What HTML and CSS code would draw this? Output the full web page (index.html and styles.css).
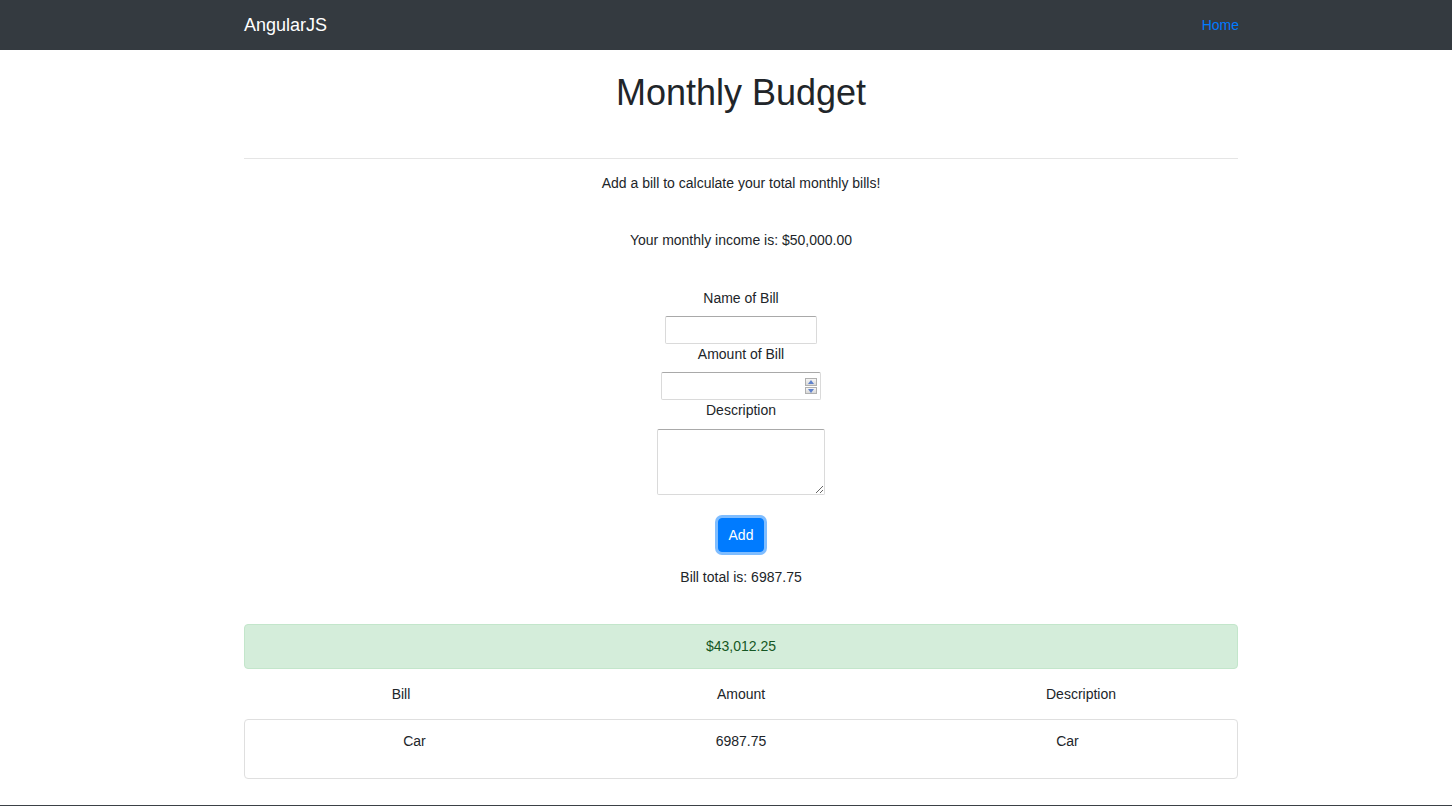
FILE: index.html
```html
<!DOCTYPE html>
<html lang="en">
<head>
<meta charset="utf-8">
<title>Monthly Budget</title>
<link rel="stylesheet" href="styles.css">
</head>
<body>
<nav class="navbar">
  <div class="nav-inner">
    <a class="brand" href="#">AngularJS</a>
    <a class="nav-link" href="#">Home</a>
  </div>
</nav>
<main class="container">
  <h1 class="title">Monthly Budget</h1>
  <hr class="divider">
  <p class="intro">Add a bill to calculate your total monthly bills!</p>
  <p class="income">Your monthly income is: $50,000.00</p>
  <form class="bill-form">
    <label class="field-label" for="bill-name">Name of Bill</label>
    <input class="field field-name" id="bill-name" type="text">
    <label class="field-label" for="bill-amount">Amount of Bill</label>
    <span class="number-wrap">
      <input class="field field-amount" id="bill-amount" type="number">
      <span class="spinner"><span class="spin spin-up"></span><span class="spin spin-down"></span></span>
    </span>
    <label class="field-label" for="bill-desc">Description</label>
    <textarea class="field field-desc" id="bill-desc"></textarea>
    <button class="btn-add" type="button">Add</button>
    <p class="bill-total">Bill total is: 6987.75</p>
  </form>
  <div class="alert-success">$43,012.25</div>
  <div class="table-head">
    <div class="cell">Bill</div>
    <div class="cell">Amount</div>
    <div class="cell">Description</div>
  </div>
  <div class="table-body">
    <div class="cell">Car</div>
    <div class="cell">6987.75</div>
    <div class="cell">Car</div>
  </div>
</main>
<footer class="footer"></footer>
</body>
</html>
```

FILE: styles.css
```css
* { box-sizing: border-box; }
html, body { margin: 0; padding: 0; }
body {
  font-family: "Liberation Sans", Arial, sans-serif;
  font-size: 14px;
  line-height: 20px;
  color: #212529;
  background: #fff;
}
.navbar {
  height: 50px;
  background: #343a40;
}
.nav-inner {
  margin-left: 244px;
  width: 994px;
  height: 100%;
  display: flex;
  align-items: center;
  justify-content: space-between;
}
.brand {
  color: #fff;
  font-size: 18px;
  line-height: 24px;
  text-decoration: none;
}
.nav-link {
  color: #007bff;
  font-size: 14px;
  text-decoration: none;
  margin-right: -1px;
}
.container {
  margin-left: 244px;
  width: 994px;
  display: flex;
  flex-direction: column;
}
.title {
  margin: 23px 0 0;
  font-size: 36px;
  line-height: 40px;
  font-weight: 400;
  text-align: center;
}
.divider {
  margin: 45px 0 0;
  border: 0;
  border-top: 1px solid rgba(0, 0, 0, 0.1);
  height: 0;
}
.intro {
  margin: 14px 0 0;
  text-align: center;
}
.income {
  margin: 37px 0 0;
  text-align: center;
}
.bill-form {
  margin-top: 38px;
  display: flex;
  flex-direction: column;
  align-items: center;
}
.field-label {
  display: block;
  margin-bottom: 8px;
}
.field {
  display: block;
  margin: 0;
  border: 1px solid #dadada;
  border-top-color: #a9a9a9;
  border-radius: 2px;
  background: #fff;
  font-family: "Liberation Sans", Arial, sans-serif;
  font-size: 13px;
  padding: 1px 3px;
}
.field-name { width: 152px; height: 28px; }
.number-wrap {
  position: relative;
  display: block;
}
.field-amount { width: 160px; height: 28px; -moz-appearance: textfield; }
.field-amount::-webkit-inner-spin-button,
.field-amount::-webkit-outer-spin-button {
  -webkit-appearance: none;
  margin: 0;
}
.spinner {
  position: absolute;
  right: 4px;
  top: 6px;
  width: 12px;
  height: 16px;
  display: flex;
  flex-direction: column;
  gap: 1px;
}
.spin {
  flex: 1;
  position: relative;
  background: linear-gradient(#f6f6f6, #d8d8d8);
  border: 1px solid #b0b0b0;
}
.spin::after {
  content: "";
  position: absolute;
  left: 2px;
  border-left: 3px solid transparent;
  border-right: 3px solid transparent;
}
.spin-up::after { top: 1px; border-bottom: 4px solid #5f82cc; }
.spin-down::after { top: 1px; border-top: 4px solid #5f82cc; }
.field-desc {
  width: 168px;
  height: 66px;
  margin-top: 1px;
  resize: both;
}
.btn-add {
  margin-top: 23px;
  height: 34px;
  padding: 6px 10px;
  border: 1px solid #007bff;
  border-radius: 4px;
  background: #007bff;
  color: #fff;
  font-family: "Liberation Sans", Arial, sans-serif;
  font-size: 14px;
  line-height: 20px;
  box-shadow: 0 0 0 3px rgba(0, 123, 255, 0.5);
}
.bill-total {
  margin: 15px 0 0;
  text-align: center;
}
.alert-success {
  margin-top: 37px;
  padding: 11px 20px 12px;
  border: 1px solid #c3e6cb;
  border-radius: 4px;
  background: #d4edda;
  color: #155724;
  text-align: center;
}
.table-head {
  margin-top: 15px;
  display: grid;
  grid-template-columns: 314px 366px 314px;
  text-align: center;
}
.table-body {
  margin-top: 15px;
  display: grid;
  grid-template-columns: 339px 314px 339px;
  text-align: center;
  border: 1px solid #dfdfdf;
  border-radius: 4px;
  padding: 11px 0 27px;
}
.footer {
  margin-top: 26px;
  height: 50px;
  background: #3b4146;
}
```
